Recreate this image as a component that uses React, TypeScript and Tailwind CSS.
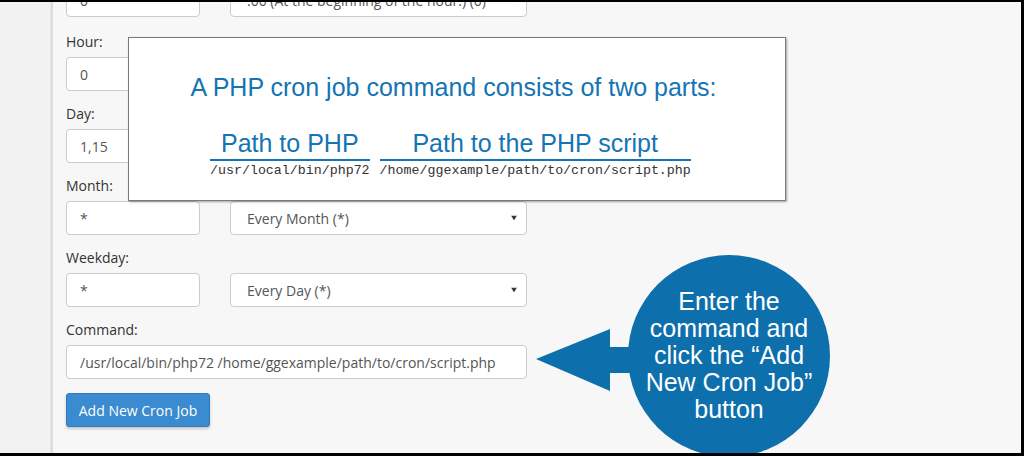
import React from "react";

function Caret() {
  return (
    <svg width="6" height="5" viewBox="0 0 6 5" className="absolute right-[9px] top-1/2 -translate-y-1/2">
      <path d="M0 0 L6 0 L3 5 Z" fill="#3a3a3a" />
    </svg>
  );
}

function TextBox({ value, w = "w-[134px]" }: { value: string; w?: string }) {
  return (
    <div className={`${w} h-[34px] shrink-0 border border-[#cccccc] rounded-[4px] bg-white pl-[13px] flex items-center text-[14px] text-[#555555] whitespace-nowrap overflow-hidden`}>
      {value}
    </div>
  );
}

function SelectBox({ value }: { value: string }) {
  return (
    <div className="relative ml-[30px] w-[297px] h-[34px] shrink-0 border border-[#cccccc] rounded-[4px] bg-white pl-[16px] flex items-center text-[14px] text-[#555555] whitespace-nowrap overflow-hidden">
      {value}
      <Caret />
    </div>
  );
}

function Group({ label, value, select }: { label: string; value: string; select: string }) {
  return (
    <div className="mb-[13px]">
      <div className="h-[20px] leading-[20px] text-[14px] text-[#333333] mb-[5px]">{label}</div>
      <div className="flex">
        <TextBox value={value} />
        <SelectBox value={select} />
      </div>
    </div>
  );
}

export default function App() {
  return (
    <div className="relative w-[1024px] h-[456px] overflow-hidden bg-[#f7f7f7] border-t-[2px] border-r-[3px] border-b-[3px] border-black flex font-['Open_Sans',sans-serif]">
      <div className="w-[50px] shrink-0 bg-[#f2f2f2]" />
      <div className="w-[3px] shrink-0 bg-[#dcdcdc] border-l border-[#e6e6e6]" />
      <div className="flex-1 pl-[13px] -mt-[19px] flex flex-col">
        <div className="flex mb-[15px]">
          <TextBox value="0" />
          <SelectBox value=":00 (At the beginning of the hour.) (0)" />
        </div>
        <Group label="Hour:" value="0" select="12:00 a.m. Midnight (0)" />
        <Group label="Day:" value="1,15" select="1st and 15th (1,15)" />
        <Group label="Month:" value="*" select="Every Month (*)" />
        <Group label="Weekday:" value="*" select="Every Day (*)" />
        <div>
          <div className="h-[20px] leading-[20px] text-[14px] text-[#333333] mb-[5px]">Command:</div>
          <TextBox value="/usr/local/bin/php72 /home/ggexample/path/to/cron/script.php" w="w-[461px]" />
        </div>
        <button className="mt-[14px] w-[144px] h-[34px] bg-[#3a8bd0] border border-[#2f7cc0] rounded-[3px] text-white text-[14px] shadow-[0_2px_3px_rgba(0,0,0,0.2)] flex items-center justify-center">
          Add New Cron Job
        </button>
      </div>

      {/* Overlay explanation box */}
      <div className="absolute left-[128px] top-[35px] w-[658px] h-[164px] bg-white border border-[#7a7a7a] shadow-[1px_1px_2px_rgba(0,0,0,0.35)] flex flex-col font-['Liberation_Sans',Arial,sans-serif]">
        <div className="pt-[35px] pr-[7px] text-center text-[25px] leading-[28px] text-[#1474b4] whitespace-nowrap">
          A PHP cron job command consists of two parts:
        </div>
        <div className="mt-[28px] ml-[81px] flex gap-[10px]">
          <div className="flex flex-col">
            <div className="text-center text-[25px] leading-[28px] text-[#1474b4] pb-[2px] border-b-[2px] border-[#1474b4] whitespace-nowrap">
              Path to PHP
            </div>
            <div className="mt-[2px] text-[13.3px] leading-[15px] text-[#333] font-['Liberation_Mono',monospace] whitespace-nowrap">
              /usr/local/bin/php72
            </div>
          </div>
          <div className="flex flex-col">
            <div className="text-center text-[25px] leading-[28px] text-[#1474b4] pb-[2px] border-b-[2px] border-[#1474b4] whitespace-nowrap">
              Path to the PHP script
            </div>
            <div className="mt-[2px] text-[13.3px] leading-[15px] text-[#333] font-['Liberation_Mono',monospace] whitespace-nowrap">
              /home/ggexample/path/to/cron/script.php
            </div>
          </div>
        </div>
      </div>

      {/* Callout arrow and circle */}
      <svg className="absolute left-0 -top-[2px]" width="1024" height="456" viewBox="0 0 1024 456">
        <polygon points="536,359 610,329 610,347 660,347 660,373 610,373 610,391" fill="#0d6fab" />
        <circle cx="729" cy="356" r="101" fill="#0d6fab" />
      </svg>
      <div className="absolute left-[628px] top-[286px] w-[202px] text-center text-white text-[25px] leading-[27px] font-['Liberation_Sans',Arial,sans-serif] whitespace-nowrap">
        Enter the
        <br />
        command and
        <br />
        click the “Add
        <br />
        New Cron Job”
        <br />
        button
      </div>
    </div>
  );
}
